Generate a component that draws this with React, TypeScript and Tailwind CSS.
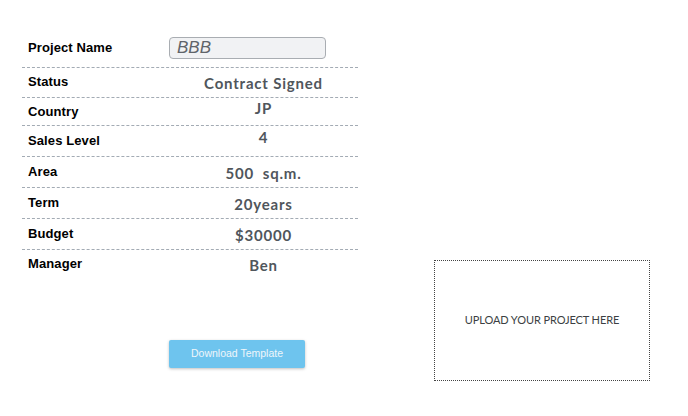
import React from 'react';

interface RowProps {
  label: string;
  value: string;
  height: string;
  labelClass?: string;
  valueClass?: string;
  last?: boolean;
}

const Row: React.FC<RowProps> = ({ label, value, height, labelClass = '', valueClass = '', last = false }) => (
  <div className={`flex items-center ${height} ${last ? '' : 'border-b border-dashed border-[#a3abb4]'}`}>
    <div className={`w-[147px] pl-[6px] text-[13px] font-bold text-black tracking-[0.1px] font-['Liberation_Sans',Arial,sans-serif] ${labelClass}`}>
      {label}
    </div>
    <div className={`flex-1 text-center text-[15px] font-bold tracking-[0.8px] text-[#50565c] font-['Lato',sans-serif] ${valueClass}`}>
      {value}
    </div>
  </div>
);

export default function App() {
  return (
    <div className="w-[688px] h-[416px] bg-white flex">
      <div className="w-[358px] pl-[22px] pt-[36px] flex flex-col">
        <div className="flex items-center h-[32px] pb-[8px] border-b border-dashed border-[#a3abb4]">
          <div className="w-[147px] pl-[6px] pt-[1px] text-[13px] font-bold text-black tracking-[0.1px] font-['Liberation_Sans',Arial,sans-serif]">
            Project Name
          </div>
          <input
            readOnly
            value="BBB"
            className="w-[157px] h-[22px] rounded-[4px] border border-[#a9adb2] bg-[#f1f2f4] px-[7px] text-[17px] italic text-[#5f646a] font-['Liberation_Sans',Arial,sans-serif] outline-none"
          />
        </div>
        <Row label="Status" value="Contract Signed" height="h-[30px]" labelClass="pb-[2px]" valueClass="pt-[1px]" />
        <Row label="Country" value="JP" height="h-[28px]" labelClass="pt-[0px]" valueClass="pb-[6px]" />
        <Row label="Sales Level" value="4" height="h-[31px]" labelClass="pb-[1px]" valueClass="pb-[7px]" />
        <Row label="Area" value="500  sq.m." height="h-[31px]" valueClass="pt-[2px] whitespace-pre" />
        <Row label="Term" value="20years" height="h-[31px]" valueClass="pt-[3px]" />
        <Row label="Budget" value="$30000" height="h-[31px]" valueClass="pt-[2px]" />
        <Row label="Manager" value="Ben" height="h-[30px]" labelClass="pb-[3px]" valueClass="pt-[1px]" last />
        <div className="mt-[59px] pl-[147px]">
          <button className="w-[136px] h-[28px] rounded-[2px] bg-[#6ec4ee] text-[10.5px] text-[#eef6fb] shadow-[0_1px_3px_rgba(0,0,0,0.25)] font-['Liberation_Sans',Arial,sans-serif]">
            Download Template
          </button>
        </div>
      </div>
      <div className="ml-[76px] mt-[260px]">
        <div className="w-[216px] h-[121px] border border-dotted border-[#444] flex items-center justify-center text-[11px] text-[#3c3f43] font-['Lato',sans-serif] tracking-[-0.1px]">
          UPLOAD YOUR PROJECT HERE
        </div>
      </div>
    </div>
  );
}
